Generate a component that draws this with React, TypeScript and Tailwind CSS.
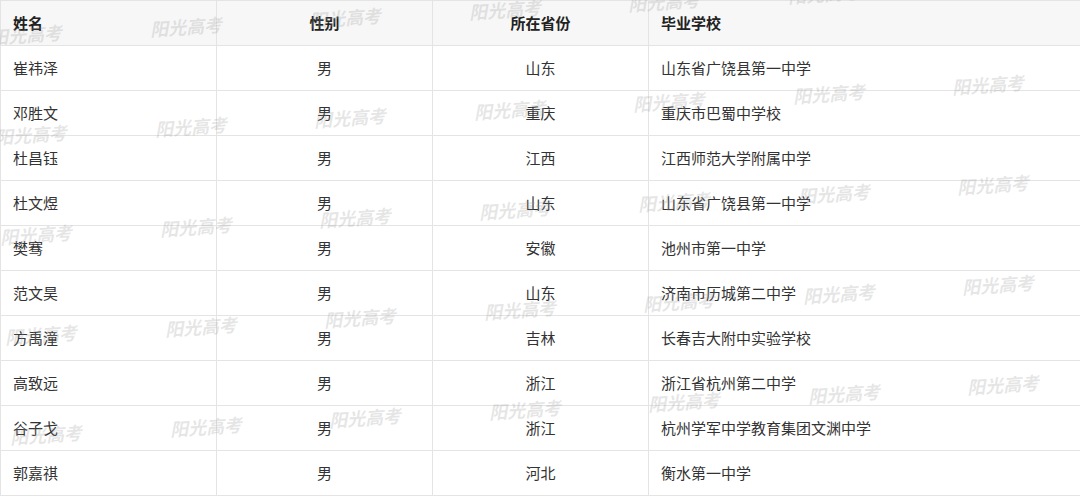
const rows = [
  { name: "崔祎泽", gender: "男", province: "山东", school: "山东省广饶县第一中学" },
  { name: "邓胜文", gender: "男", province: "重庆", school: "重庆市巴蜀中学校" },
  { name: "杜昌钰", gender: "男", province: "江西", school: "江西师范大学附属中学" },
  { name: "杜文煜", gender: "男", province: "山东", school: "山东省广饶县第一中学" },
  { name: "樊骞", gender: "男", province: "安徽", school: "池州市第一中学" },
  { name: "范文昊", gender: "男", province: "山东", school: "济南市历城第二中学" },
  { name: "方禹潼", gender: "男", province: "吉林", school: "长春吉大附中实验学校" },
  { name: "高致远", gender: "男", province: "浙江", school: "浙江省杭州第二中学" },
  { name: "谷子戈", gender: "男", province: "浙江", school: "杭州学军中学教育集团文渊中学" },
  { name: "郭嘉祺", gender: "男", province: "河北", school: "衡水第一中学" },
];

// watermark grid: 5 rows x 7 columns, drifting up to the right
const marks: { left: number; top: number }[] = [];
for (let r = 0; r < 5; r++) {
  for (let c = 0; c < 7; c++) {
    marks.push({ left: -10 + 5 * r + 159.5 * c, top: 27 + 100 * r - 8.3 * c });
  }
}

const font = { fontFamily: '"Noto Sans CJK SC", "Noto Sans", sans-serif' };

export default function App() {
  return (
    <div className="relative w-[1080px] h-[497px] bg-white overflow-hidden" style={font}>
      <table className="w-[1080px] table-fixed border-collapse text-[15px] text-[#333]">
        <colgroup>
          <col className="w-[216px]" />
          <col className="w-[216px]" />
          <col className="w-[216px]" />
          <col className="w-[432px]" />
        </colgroup>
        <thead>
          <tr className="bg-[#f7f7f7] h-[45px]">
            <th className="border border-[#e4e4e4] px-3 text-left font-bold text-[#222]">姓名</th>
            <th className="border border-[#e4e4e4] px-3 text-center font-bold text-[#222]">性别</th>
            <th className="border border-[#e4e4e4] px-3 text-center font-bold text-[#222]">所在省份</th>
            <th className="border border-[#e4e4e4] px-3 text-left font-bold text-[#222]">毕业学校</th>
          </tr>
        </thead>
        <tbody>
          {rows.map((r) => (
            <tr key={r.name} className="h-[45px]">
              <td className="border border-[#e4e4e4] px-3">{r.name}</td>
              <td className="border border-[#e4e4e4] px-3 text-center">{r.gender}</td>
              <td className="border border-[#e4e4e4] px-3 text-center">{r.province}</td>
              <td className="border border-[#e4e4e4] px-3">{r.school}</td>
            </tr>
          ))}
        </tbody>
      </table>

      <div className="pointer-events-none absolute inset-0 overflow-hidden">
        {marks.map((m, i) => (
          <span
            key={i}
            className="absolute whitespace-nowrap text-[18px] leading-none font-bold italic text-[#9a9a9a]/25 -rotate-[4deg]"
            style={{ left: m.left, top: m.top, fontFamily: '"Liberation Serif", "Noto Sans CJK SC", serif' }}
          >
            阳光高考
          </span>
        ))}
      </div>
    </div>
  );
}
